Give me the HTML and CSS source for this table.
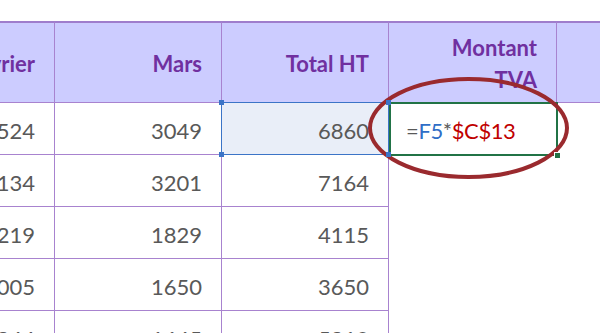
FILE: index.html
```html
<!DOCTYPE html>
<html lang="fr">
<head>
<meta charset="utf-8">
<title>Montant TVA</title>
<link rel="stylesheet" href="styles.css">
</head>
<body>
<div class="sheet">
  <div class="grid">
    <div class="cell head">Février</div>
    <div class="cell head">Mars</div>
    <div class="cell head">Total HT</div>
    <div class="cell head">Montant<br>TVA</div>
    <div class="cell head"></div>

    <div class="cell num">2524</div>
    <div class="cell num">3049</div>
    <div class="cell num ref">6860<i class="h tl"></i><i class="h tr"></i><i class="h bl"></i><i class="h br"></i></div>
    <div class="cell active"><span class="op">=</span><span class="blue">F5</span><span class="op">*</span><span class="red">$C$13</span><i class="fill"></i></div>
    <div class="cell empty"></div>

    <div class="cell num">2134</div>
    <div class="cell num">3201</div>
    <div class="cell num">7164</div>
    <div class="cell empty"></div>
    <div class="cell empty"></div>

    <div class="cell num">1219</div>
    <div class="cell num">1829</div>
    <div class="cell num">4115</div>
    <div class="cell empty"></div>
    <div class="cell empty"></div>

    <div class="cell num">1005</div>
    <div class="cell num">1650</div>
    <div class="cell num">3650</div>
    <div class="cell empty"></div>
    <div class="cell empty"></div>

    <div class="cell num">1844</div>
    <div class="cell num">1645</div>
    <div class="cell num">5810</div>
    <div class="cell empty"></div>
    <div class="cell empty"></div>
  </div>
</div>
<svg class="ring" width="208" height="110" viewBox="0 0 208 110">
  <ellipse cx="104.5" cy="55" rx="98.5" ry="49" fill="none" stroke="#9a2a2e" stroke-width="4"/>
</svg>
</body>
</html>
```
FILE: styles.css
```css
html, body {
  margin: 0;
  padding: 0;
  background: #ffffff;
}
body {
  width: 600px;
  height: 333px;
  overflow: hidden;
  position: relative;
  font-family: "Lato", "Open Sans", "Liberation Sans", sans-serif;
}
.sheet {
  padding-top: 21px;
  margin-left: -112px;
}
.grid {
  display: grid;
  grid-template-columns: 167px 167px 167px 168px 167px;
  grid-template-rows: 82px repeat(5, 52px);
}
.cell {
  box-sizing: border-box;
  display: flex;
  align-items: center;
  justify-content: flex-end;
  font-size: 22px;
  position: relative;
}
.head {
  background: #ccccff;
  border-top: 2px solid #9f7dcc;
  border-right: 1px solid #a883cf;
  border-bottom: 1px solid #a883cf;
  color: #7030a0;
  font-weight: 700;
  text-align: right;
  line-height: 32px;
  padding: 2px 19px 0 0;
}
.num {
  border-right: 1px solid #a883cf;
  border-bottom: 1px solid #a883cf;
  color: #595959;
  padding: 3px 19px 0 0;
}
.empty {
  border: none;
}
.ref {
  background: #e9eef8;
}
.ref::after {
  content: "";
  position: absolute;
  left: -1px;
  top: -1px;
  right: -1px;
  bottom: -1px;
  border: 1px solid #3b74c7;
}
.h {
  position: absolute;
  width: 5px;
  height: 5px;
  background: #3b74c7;
  z-index: 2;
}
.tl { left: -3px; top: -3px; }
.tr { right: -3px; top: -3px; }
.bl { left: -3px; bottom: -3px; }
.br { right: -3px; bottom: -3px; }
.active {
  justify-content: flex-start;
  padding: 3px 0 0 17px;
  color: #595959;
  letter-spacing: -0.4px;
}
.active::after {
  content: "";
  position: absolute;
  left: 0;
  top: -1px;
  right: -1px;
  bottom: -1px;
  border: 2px solid #217346;
}
.fill {
  position: absolute;
  right: -4px;
  bottom: -4px;
  width: 5px;
  height: 5px;
  background: #217346;
  border: 1px solid #ffffff;
  z-index: 2;
}
.blue { color: #2f6ec7; }
.red { color: #c00000; }
.op { color: #595959; }
.ring {
  position: absolute;
  left: 364px;
  top: 73px;
}
```
